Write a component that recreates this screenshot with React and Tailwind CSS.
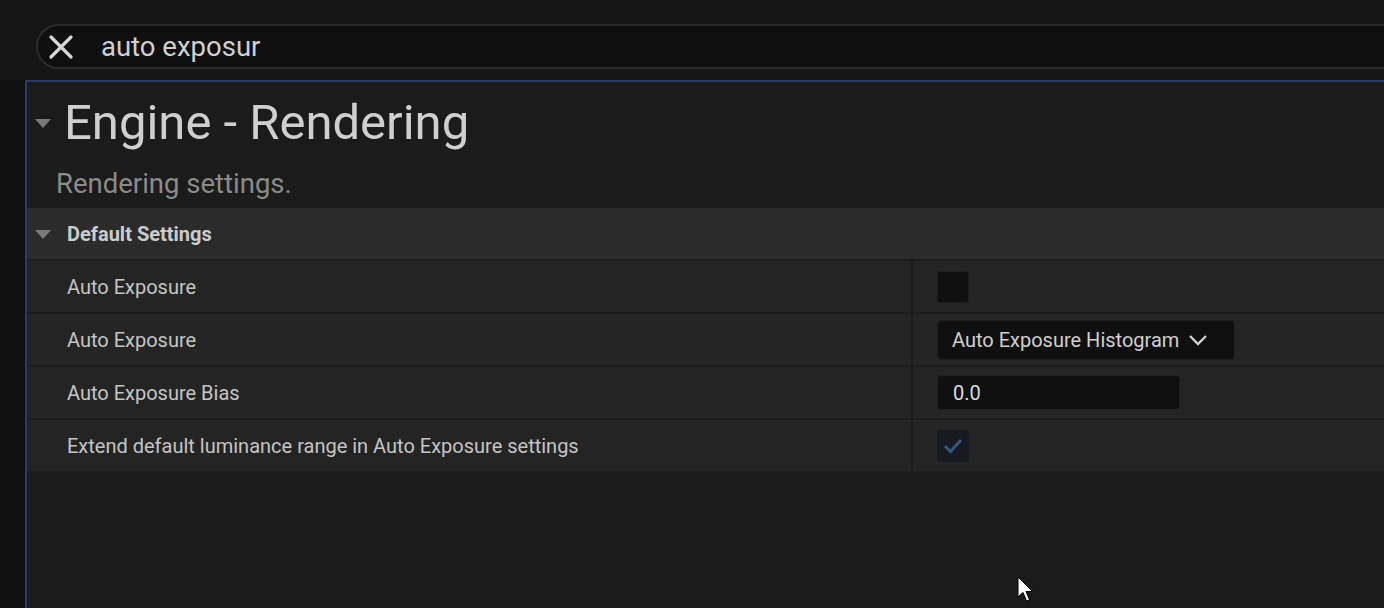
import React from 'react';

const Tri = () => (
  <svg width="18" height="12" viewBox="0 0 18 12" className="shrink-0">
    <path d="M1 2 L17 2 L9 11 Z" fill="#7a7a7a" />
  </svg>
);

const Row = ({ label, children }) => (
  <div className="flex h-[53px] bg-[#242424] border-b-2 border-[#1c1c1c]">
    <div className="w-[886px] pl-[40px] flex items-center text-[20px] text-[#c4c4c4] border-r-2 border-[#1c1c1c]">
      {label}
    </div>
    <div className="flex-1 pl-[24px] flex items-center">{children}</div>
  </div>
);

export default function App() {
  return (
    <div
      className="w-[1384px] h-[608px] bg-[#161616] overflow-hidden flex flex-col relative"
      style={{ fontFamily: 'Roboto, "Noto Sans", sans-serif' }}
    >
      {/* Search */}
      <div className="mt-[24px] ml-[36px] mr-[-30px] h-[45px] rounded-full border-2 border-[#2c2c2c] bg-[#0f0f0f] flex items-center">
        <svg width="26" height="26" viewBox="0 0 26 26" className="ml-[10px]">
          <path d="M3 3 L23 23 M23 3 L3 23" stroke="#d6d6d6" strokeWidth="3.2" strokeLinecap="round" />
        </svg>
        <span className="ml-[27px] text-[27.5px] text-[#d0d0d0]">auto exposur</span>
      </div>

      <div className="flex flex-1 mt-[11px]">
        <div className="w-[25px] bg-[#101010]" />
        {/* Panel */}
        <div className="flex-1 border-l-2 border-t-2 border-[#2b3c5e] bg-[#1b1b1b] flex flex-col">
          <div className="flex items-center pl-[7px] pt-[13px]">
            <Tri />
            <span className="ml-[12px] text-[49px] leading-[56px] text-[#cfcfcf]">Engine - Rendering</span>
          </div>
          <div className="pl-[29px] mt-[17px] text-[27.5px] leading-[32px] text-[#8a8a8a]">Rendering settings.</div>
          <div className="mt-[8px] h-[53px] bg-[#2b2b2b] border-b-2 border-[#1c1c1c] flex items-center pl-[7px]">
            <Tri />
            <span className="ml-[15px] text-[20px] font-bold text-[#cccccc]">Default Settings</span>
          </div>
          <Row label="Auto Exposure">
            <div className="w-[32px] h-[32px] rounded-[3px] bg-[#0f0f0f] border border-[#1e1e1e]" />
          </Row>
          <Row label="Auto Exposure">
            <div className="h-[40px] w-[298px] rounded-[4px] bg-[#0f0f0f] border border-[#1e1e1e] flex items-center pl-[14px] text-[20px] text-[#cfcfcf]">
              Auto Exposure Histogram
              <svg width="20" height="12" viewBox="0 0 20 12" className="ml-[9px]">
                <path d="M2 2 L10 10 L18 2" fill="none" stroke="#d0d0d0" strokeWidth="2.4" />
              </svg>
            </div>
          </Row>
          <Row label="Auto Exposure Bias">
            <div className="h-[35px] w-[243px] rounded-[4px] bg-[#0f0f0f] border border-[#1e1e1e] flex items-center pl-[15px] text-[20px] text-[#dcdcdc]">
              0.0
            </div>
          </Row>
          <Row label="Extend default luminance range in Auto Exposure settings">
            <div className="w-[32px] h-[32px] rounded-[3px] bg-[#171a20] flex items-center justify-center">
              <svg width="22" height="18" viewBox="0 0 22 18">
                <path d="M3 9 L8.5 14.5 L19 3" fill="none" stroke="#365580" strokeWidth="3" />
              </svg>
            </div>
          </Row>
          <div className="flex-1" />
        </div>
      </div>

      {/* cursor */}
      <svg width="20" height="28" viewBox="0 0 20 28" className="absolute left-[1017px] top-[576px]">
        <path d="M1 1 L1 21 L6 16.5 L9.5 25 L12.5 23.8 L9 15.5 L15.5 15.5 Z" fill="#ffffff" stroke="#000" strokeWidth="1" />
      </svg>
    </div>
  );
}
